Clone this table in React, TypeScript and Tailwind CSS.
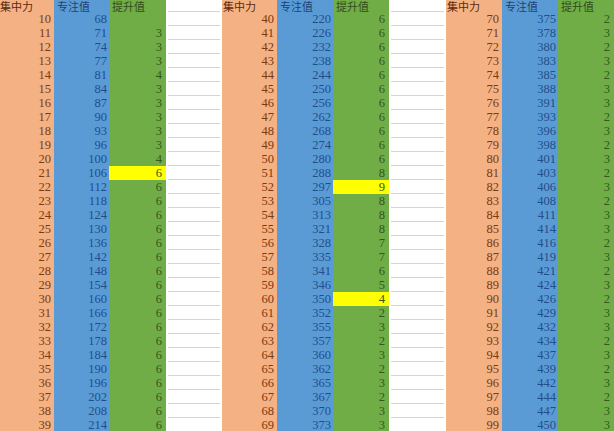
import React from "react";

type Group = { start: number; focus: number[]; gain: (number | null)[]; yellow: number[] };

const groups: Group[] = [
  {
    start: 10,
    focus: [68, 71, 74, 77, 81, 84, 87, 90, 93, 96, 100, 106, 112, 118, 124, 130, 136, 142, 148, 154, 160, 166, 172, 178, 184, 190, 196, 202, 208, 214],
    gain: [null, 3, 3, 3, 4, 3, 3, 3, 3, 3, 4, 6, 6, 6, 6, 6, 6, 6, 6, 6, 6, 6, 6, 6, 6, 6, 6, 6, 6, 6],
    yellow: [11],
  },
  {
    start: 40,
    focus: [220, 226, 232, 238, 244, 250, 256, 262, 268, 274, 280, 288, 297, 305, 313, 321, 328, 335, 341, 346, 350, 352, 355, 357, 360, 362, 365, 367, 370, 373],
    gain: [6, 6, 6, 6, 6, 6, 6, 6, 6, 6, 6, 8, 9, 8, 8, 8, 7, 7, 6, 5, 4, 2, 3, 2, 3, 2, 3, 2, 3, 3],
    yellow: [12, 20],
  },
  {
    start: 70,
    focus: [375, 378, 380, 383, 385, 388, 391, 393, 396, 398, 401, 403, 406, 408, 411, 414, 416, 419, 421, 424, 426, 429, 432, 434, 437, 439, 442, 444, 447, 450],
    gain: [2, 3, 2, 3, 2, 3, 3, 2, 3, 2, 3, 2, 3, 2, 3, 3, 2, 3, 2, 3, 2, 3, 3, 2, 3, 2, 3, 2, 3, 3],
    yellow: [],
  },
];

const rows = Array.from({ length: 30 }, (_, i) => i);

const cjk = { fontFamily: '"Noto Sans CJK SC", "Noto Sans", sans-serif' };
const serif = { fontFamily: '"Liberation Serif", "DejaVu Serif", serif' };

const headCls = "h-[12px] text-[11px] leading-[12px] whitespace-nowrap overflow-visible";

function OrangeCol({ g, w, first }: { g: Group; w: string; first?: boolean }) {
  return (
    <div className={`flex flex-col shrink-0 bg-[#f4b183] ${w}`}>
      <div className={`${headCls} text-[#5a2a10] ${first ? "pl-0" : "pl-[1px]"}`} style={cjk}>
        集中力
      </div>
      {rows.map((i) => (
        <div key={i} className="h-[14px] text-[12.5px] leading-[14px] text-right pr-[3px] text-[#7a3a12]" style={serif}>
          {g.start + i}
        </div>
      ))}
    </div>
  );
}

function BlueCol({ g, w }: { g: Group; w: string }) {
  return (
    <div className={`flex flex-col shrink-0 bg-[#5b9bd5] ${w}`}>
      <div className={`${headCls} text-[#1f3f6e] pl-[3px]`} style={cjk}>
        专注值
      </div>
      {rows.map((i) => (
        <div key={i} className="h-[14px] text-[12.5px] leading-[14px] text-right pr-[2px] text-[#1f4e8c]" style={serif}>
          {g.focus[i]}
        </div>
      ))}
    </div>
  );
}

function GreenCol({ g, w }: { g: Group; w: string }) {
  return (
    <div className={`flex flex-col shrink-0 bg-[#70ad47] ${w}`}>
      <div className={`${headCls} text-[#2f4a1c] pl-[3px]`} style={cjk}>
        提升值
      </div>
      {rows.map((i) => (
        <div
          key={i}
          className={`h-[14px] text-[12.5px] leading-[14px] text-right pr-[4px] text-[#34561f] ${g.yellow.includes(i) ? "bg-[#ffff00]" : ""}`}
          style={serif}
        >
          {g.gain[i] ?? ""}
        </div>
      ))}
    </div>
  );
}

function WhiteCol({ w }: { w: string }) {
  return (
    <div className={`flex flex-col shrink-0 bg-white ${w}`}>
      <div className="h-[12px] mx-[2px] border-b border-[#d4d4d4]" />
      {rows.map((i) => (
        <div key={i} className="h-[14px] mx-[2px] border-b border-[#d4d4d4]" />
      ))}
    </div>
  );
}

export default function App() {
  return (
    <div className="w-[614px] h-[431px] overflow-hidden bg-white">
      <div className="flex w-[614px]">
        <OrangeCol g={groups[0]} w="w-[54px]" first />
        <BlueCol g={groups[0]} w="w-[55px]" />
        <GreenCol g={groups[0]} w="w-[57px]" />
        <WhiteCol w="w-[56px]" />
        <OrangeCol g={groups[1]} w="w-[55px]" />
        <BlueCol g={groups[1]} w="w-[56px]" />
        <GreenCol g={groups[1]} w="w-[56px]" />
        <WhiteCol w="w-[57px]" />
        <OrangeCol g={groups[2]} w="w-[56px]" />
        <BlueCol g={groups[2]} w="w-[56px]" />
        <GreenCol g={groups[2]} w="w-[56px]" />
      </div>
    </div>
  );
}
